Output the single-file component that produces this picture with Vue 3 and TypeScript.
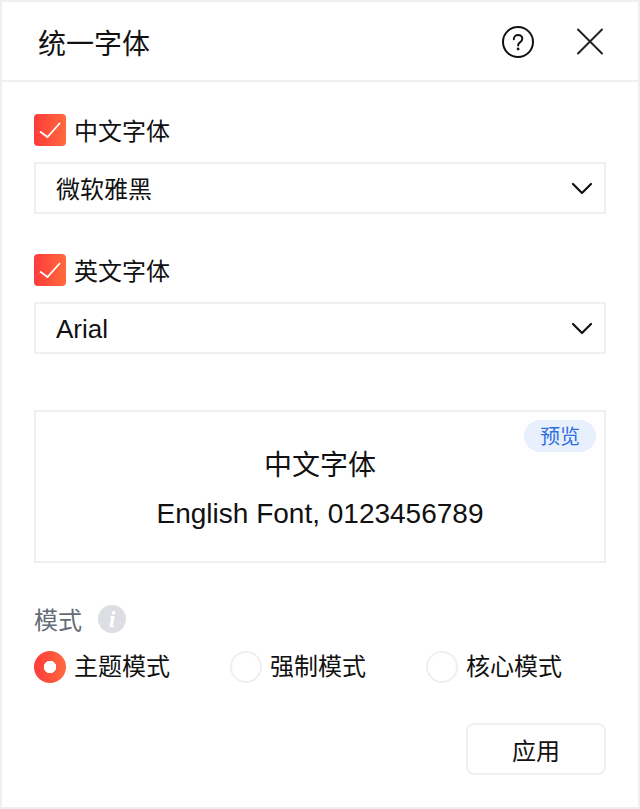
<script setup lang="ts">
const modes: { label: string; checked: boolean }[] = [
  { label: '主题模式', checked: true },
  { label: '强制模式', checked: false },
  { label: '核心模式', checked: false },
]
const fonts: { label: string; value: string; latin: boolean }[] = [
  { label: '中文字体', value: '微软雅黑', latin: false },
  { label: '英文字体', value: 'Arial', latin: true },
]
</script>

<template>
  <div class="panel">
    <header class="header">
      <span class="title">统一字体</span>
      <div class="actions">
        <svg class="help" width="32" height="32" viewBox="0 0 32 32" fill="none" stroke="#111" stroke-width="2">
          <circle cx="16" cy="16" r="15" />
          <path d="M11.800 13.200c0-2.500 1.900-4.200 4.300-4.200s4.200 1.600 4.200 3.800c0 1.800-1 2.700-2.300 3.600-1.200.8-1.900 1.500-1.900 3" stroke-linecap="round" />
          <circle cx="16.100" cy="23" r="1.400" fill="#111" stroke="none" />
        </svg>
        <svg class="close" width="28" height="27" viewBox="0 0 28 27" fill="none" stroke="#222" stroke-width="2" stroke-linecap="round">
          <path d="M2 1.500l24 24M26 1.500l-24 24" />
        </svg>
      </div>
    </header>
    <main class="body">
      <section v-for="f in fonts" :key="f.label" class="field">
        <label class="check-row">
          <span class="check">
            <svg width="32" height="32" viewBox="0 0 32 32" fill="none" stroke="#fff" stroke-width="1.800">
              <path d="M6 17.500l7.500 5.500L26 9" />
            </svg>
          </span>
          <span class="check-label">{{ f.label }}</span>
        </label>
        <div class="select">
          <span :class="f.latin ? 'value-latin' : 'value-cjk'">{{ f.value }}</span>
          <svg width="22" height="13" viewBox="0 0 22 13" fill="none" stroke="#111" stroke-width="2.200" stroke-linecap="round" stroke-linejoin="round">
            <path d="M2 2l9 9 9-9" />
          </svg>
        </div>
      </section>
      <section class="preview">
        <span class="tag">预览</span>
        <div class="preview-cn">中文字体</div>
        <div class="preview-en">English Font, 0123456789</div>
      </section>
      <section class="mode">
        <div class="mode-title">
          <span class="mode-text">模式</span>
          <span class="info">i</span>
        </div>
        <div class="radios">
          <label v-for="m in modes" :key="m.label" class="radio-row">
            <span class="radio" :class="{ on: m.checked }"></span>
            <span class="label">{{ m.label }}</span>
          </label>
        </div>
      </section>
      <footer class="footer">
        <button class="apply" type="button">应用</button>
      </footer>
    </main>
  </div>
</template>

<style>
html, body { margin: 0; background: #fff; }
</style>

<style scoped>
.panel {
  box-sizing: border-box;
  width: 640px;
  height: 809px;
  border: 2px solid #edf0f2;
  background: #fff;
  color: #111;
  font-family: "Liberation Sans", "Noto Sans CJK SC", sans-serif;
  font-size: 24px;
  display: flex;
  flex-direction: column;
}
.header {
  box-sizing: border-box;
  height: 80px;
  flex: none;
  border-bottom: 2px solid #edf0f2;
  padding: 0 34px 0 36px;
  display: flex;
  align-items: center;
  justify-content: space-between;
}
.title { font-size: 28px; line-height: 36px; padding-top: 8px; }
.actions { display: flex; align-items: center; gap: 42px; padding-top: 1px; }
.actions svg { display: block; }
.body {
  flex: 1;
  padding: 32px 32px 0;
  display: flex;
  flex-direction: column;
}
.field { margin-bottom: 40px; }
.field:nth-of-type(2) { margin-bottom: 56px; }
.check-row { display: flex; align-items: center; gap: 8px; height: 32px; margin-bottom: 16px; }
.check {
  width: 32px;
  height: 32px;
  border-radius: 4px;
  background: linear-gradient(90deg, #ff3b3b, #ff6a3d);
  display: block;
}
.check svg { display: block; }
.check-label { line-height: 32px; padding-top: 4px; }
.label { line-height: 32px; }
.select {
  box-sizing: border-box;
  height: 52px;
  border: 2px solid #edf0f2;
  padding: 0 20px;
  display: flex;
  align-items: center;
  justify-content: space-between;
}
.value-cjk { padding-bottom: 2px; }
.value-latin { font-size: 26px; padding-top: 2px; }
.select svg { display: block; margin-right: -9px; }
.preview {
  position: relative;
  box-sizing: border-box;
  height: 153px;
  border: 2px solid #edf0f2;
  text-align: center;
  padding-top: 34px;
}
.tag {
  position: absolute;
  top: 8px;
  right: 8px;
  width: 72px;
  height: 32px;
  border-radius: 16px;
  background: #e8f0fe;
  color: #2f6fe0;
  font-size: 20px;
  line-height: 35px;
}
.preview-cn { font-size: 28px; line-height: 40px; }
.preview-en { font-size: 28px; line-height: 36px; margin-top: 10px; }
.mode { margin-top: 38px; }
.mode-title {
  display: flex;
  align-items: center;
  gap: 16px;
  color: #646b76;
  height: 36px;
}
.mode-text { padding-bottom: 1px; }
.info {
  width: 28px;
  height: 28px;
  border-radius: 50%;
  background: #dcdee3;
  color: #fff;
  font-family: "Liberation Serif", serif;
  font-style: italic;
  font-weight: 700;
  font-size: 24px;
  line-height: 28px;
  text-align: center;
}
.radios { display: flex; margin-top: 14px; }
.radio-row { flex: none; display: flex; align-items: center; gap: 8px; width: 196px; height: 32px; }
.radio {
  box-sizing: border-box;
  width: 32px;
  height: 32px;
  border-radius: 50%;
  border: 2px solid #edf0f2;
}
.radio.on {
  border: none;
  background:
    radial-gradient(circle, #fff 0 6px, transparent 6.500px),
    linear-gradient(90deg, #ff3b3b, #ff6a3d);
}
.footer { display: flex; justify-content: flex-end; margin-top: 40px; }
.apply {
  box-sizing: border-box;
  width: 140px;
  height: 52px;
  border: 2px solid #edf0f2;
  border-radius: 8px;
  background: #fff;
  color: #111;
  font: inherit;
  padding: 0;
}
</style>
